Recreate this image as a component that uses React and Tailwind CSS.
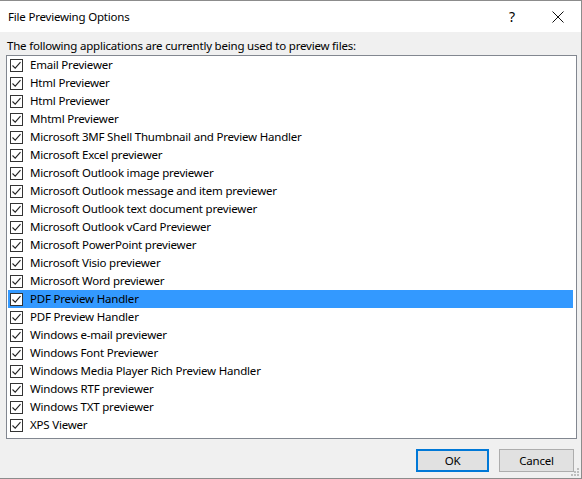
const items = [
  "Email Previewer",
  "Html Previewer",
  "Html Previewer",
  "Mhtml Previewer",
  "Microsoft 3MF Shell Thumbnail and Preview Handler",
  "Microsoft Excel previewer",
  "Microsoft Outlook image previewer",
  "Microsoft Outlook message and item previewer",
  "Microsoft Outlook text document previewer",
  "Microsoft Outlook vCard Previewer",
  "Microsoft PowerPoint previewer",
  "Microsoft Visio previewer",
  "Microsoft Word previewer",
  "PDF Preview Handler",
  "PDF Preview Handler",
  "Windows e-mail previewer",
  "Windows Font Previewer",
  "Windows Media Player Rich Preview Handler",
  "Windows RTF previewer",
  "Windows TXT previewer",
  "XPS Viewer",
];

function Check() {
  return (
    <div className="w-[13px] h-[13px] border border-[#333] bg-white flex items-center justify-center shrink-0">
      <svg width="11" height="11" viewBox="0 0 11 11">
        <path d="M1.5 5.5 L4.2 8.2 L9.5 2.2" fill="none" stroke="#222" strokeWidth="1.1" />
      </svg>
    </div>
  );
}

export default function App() {
  return (
    <div
      className="relative w-[582px] h-[479px] bg-[#f0f0f0] border-t border-r border-b border-[#8c8c8c] flex flex-col text-[11.5px] tracking-[-0.2px] text-black"
      style={{ fontFamily: '"Noto Sans", "Liberation Sans", sans-serif' }}
    >
      <div className="h-[31px] bg-white flex items-center pl-[8px] shrink-0">
        <span className="flex-1">File Previewing Options</span>
        <span className="w-[46px] text-center text-[14px]">?</span>
        <div className="w-[46px] flex justify-center">
          <svg width="12" height="12" viewBox="0 0 12 12">
            <path d="M0.5 0.5 L11.5 11.5 M11.5 0.5 L0.5 11.5" stroke="#111" strokeWidth="1" />
          </svg>
        </div>
      </div>
      <div className="pl-[7px] pt-[6px] h-[23px] leading-[16px]">
        The following applications are currently being used to preview files:
      </div>
      <div className="ml-[6px] mr-[4px] h-[384px] bg-white border border-[#828790] pl-[1px] pr-[3px]">
        {items.map((t, i) => (
          <div
            key={i}
            className={`h-[18px] flex items-center pl-[2px] gap-[7px] ${i === 13 ? "bg-[#3399ff]" : ""}`}
          >
            <Check />
            <span className="leading-[18px] whitespace-nowrap">{t}</span>
          </div>
        ))}
      </div>
      <div className="flex justify-end gap-[10px] pr-[7px] pt-[10px]">
        <button className="w-[73px] h-[23px] bg-[#e1e1e1] border-2 border-[#0078d7] leading-[19px]">OK</button>
        <button className="w-[75px] h-[23px] bg-[#e1e1e1] border border-[#adadad]">Cancel</button>
      </div>
      <svg className="absolute right-[1px] bottom-[1px]" width="10" height="10" viewBox="0 0 10 10">
        <g fill="#bdbdbd">
          <rect x="7" y="1" width="2" height="2" />
          <rect x="4" y="4" width="2" height="2" />
          <rect x="7" y="4" width="2" height="2" />
          <rect x="1" y="7" width="2" height="2" />
          <rect x="4" y="7" width="2" height="2" />
          <rect x="7" y="7" width="2" height="2" />
        </g>
      </svg>
    </div>
  );
}
